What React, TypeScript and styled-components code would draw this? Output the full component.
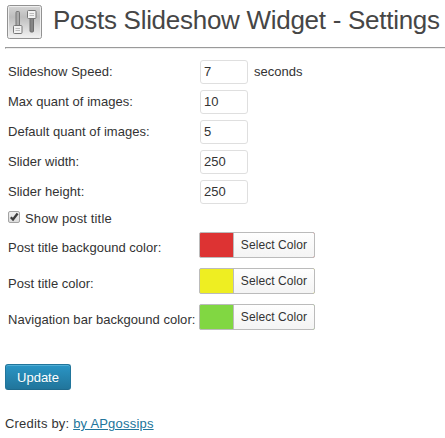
import React, { useState } from "react";
import styled, { createGlobalStyle } from "styled-components";

const GlobalStyle = createGlobalStyle`
  * { box-sizing: border-box; }
  body {
    margin: 0;
    background: #fff;
    color: #333;
    font: 13px/20px "Liberation Sans", Arial, sans-serif;
  }
`;

const Page = styled.main`
  width: 445px;
  height: 438px;
  padding-left: 5px;
  overflow: hidden;
`;

const Header = styled.header`
  display: flex;
  height: 47px;
  padding: 4px 0 0 1px;
`;

const Title = styled.h1`
  margin: 0 0 0 10px;
  font-size: 26px;
  line-height: 32px;
  font-weight: 400;
  letter-spacing: -0.28px;
  color: #464646;
  white-space: nowrap;
`;

const Rule = styled.hr`
  height: 2px;
  margin: 0 0 8px;
  border: 1px solid;
  border-color: #9a9a9a #eee #eee #9a9a9a;
  border-right: 0;
`;

const Row = styled.div<{ $height: number }>`
  display: grid;
  grid-template-columns: 191px auto;
  justify-content: start;
  align-items: center;
  height: ${(p) => p.$height}px;
  padding-left: 3px;
  white-space: nowrap;
`;

const Label = styled.label<{ $drop?: number }>`
  padding-top: ${(p) => p.$drop ?? 0}px;
  letter-spacing: 0.03px;
`;

const Field = styled.div`
  display: flex;
  align-items: center;
  gap: 6px;
  padding-left: 1px;
`;

const NumberInput = styled.input`
  width: 48px;
  height: 24px;
  padding: 2px 3px 4px;
  border: 1px solid #dfdfdf;
  border-radius: 3px;
  background: #fff;
  color: #333;
  font: 13px/15px "Liberation Sans", Arial, sans-serif;
`;

const CheckRow = styled.label`
  display: flex;
  align-items: center;
  gap: 5px;
  height: 20px;
  padding: 3px 0 0 3px;
  line-height: 22px;
  letter-spacing: 0.15px;
`;

const ColorButton = styled.button<{ $color: string }>`
  display: flex;
  width: 116px;
  height: 26px;
  padding: 0;
  border: 1px solid #bbb;
  border-radius: 2px;
  background: ${(p) => p.$color};
  overflow: hidden;
`;

const ColorText = styled.span`
  width: 81px;
  height: 24px;
  margin-left: auto;
  border-left: 1px solid #bbb;
  background: linear-gradient(#fefefe, #f4f4f4);
  color: #333;
  font: 12px/24px "Liberation Sans", Arial, sans-serif;
  letter-spacing: 0.08px;
  text-align: center;
`;

const UpdateButton = styled.button`
  display: block;
  width: 66px;
  height: 26px;
  margin-top: 29px;
  padding: 1px 0 0;
  border: 1px solid #21759b;
  border-bottom-color: #1e6a8d;
  border-radius: 3px;
  background: linear-gradient(#2a95c5, #21759b);
  box-shadow: inset 0 1px 0 rgba(120, 200, 230, 0.5);
  color: #fff;
  font: 13px/23px "Liberation Sans", Arial, sans-serif;
  text-shadow: 0 1px 0 rgba(0, 0, 0, 0.1);
`;

const Credits = styled.p`
  margin: 24px 0 0;
  letter-spacing: 0.2px;
`;

const CreditLink = styled.a`
  color: #21759b;
`;

const IconSvg = styled.svg`
  flex: none;
`;

const SlidersIcon = () => (
  <IconSvg width="37" height="36" viewBox="0 0 37 36" aria-hidden="true">
    <defs>
      <linearGradient id="panel" x1="0" y1="0" x2="0" y2="1">
        <stop offset="0" stopColor="#d6d6d6" />
        <stop offset="0.35" stopColor="#bdbdbd" />
        <stop offset="1" stopColor="#f4f4f4" />
      </linearGradient>
    </defs>
    <rect x="1.5" y="1.5" width="34" height="33" rx="2" fill="url(#panel)" stroke="#929292" />
    <rect x="2.5" y="2.5" width="32" height="31" rx="1" fill="none" stroke="#eee" />
    <rect x="10" y="7.5" width="3.5" height="15" rx="1" fill="#aaa" stroke="#777" />
    <rect x="24" y="12.5" width="3.5" height="15.5" rx="1" fill="#858585" stroke="#6d6d6d" />
    <rect x="7.5" y="21.5" width="8.5" height="8" rx="1" fill="#f2f2f2" stroke="#777" />
    <path d="M9.5 24.5h4.5M9.5 26.5h4.5" stroke="#bbb" />
    <rect x="21.5" y="6.5" width="8.5" height="8" rx="1" fill="#f2f2f2" stroke="#777" />
    <path d="M23.5 9.5h4.5M23.5 11.5h4.5" stroke="#bbb" />
  </IconSvg>
);

const CheckControl = styled.button`
  width: 12px;
  height: 12px;
  margin-top: -4px;
  padding: 0;
  border: 1px solid #a3a3a3;
  border-radius: 2px;
  background: linear-gradient(#eee, #ddd);
  svg { display: block; overflow: visible; }
`;

const numberFields = [
  { label: "Slideshow Speed:", value: "7", unit: "seconds" },
  { label: "Max quant of images:", value: "10" },
  { label: "Default quant of images:", value: "5" },
  { label: "Slider width:", value: "250" },
  { label: "Slider height:", value: "250" },
];

const colorFields = [
  { label: "Post title backgound color:", color: "#dd3333" },
  { label: "Post title color:", color: "#eeee22" },
  { label: "Navigation bar backgound color:", color: "#81d742" },
];

export default function App() {
  const [showTitle, setShowTitle] = useState(true);
  return (
    <Page>
      <GlobalStyle />
      <Header>
        <SlidersIcon />
        <Title>Posts Slideshow Widget - Settings</Title>
      </Header>
      <Rule />
      {numberFields.map((f, i) => (
        <Row key={f.label} $height={30}>
          <Label htmlFor={`n${i}`}>{f.label}</Label>
          <Field>
            <NumberInput id={`n${i}`} defaultValue={f.value} />
            {f.unit && <span>{f.unit}</span>}
          </Field>
        </Row>
      ))}
      <CheckRow>
        <CheckControl
          role="checkbox"
          aria-checked={showTitle}
          onClick={() => setShowTitle(!showTitle)}
        >
          {showTitle && (
            <svg width="10" height="10" viewBox="0 0 10 10">
              <path d="M1.8 5.2 4 7.5 8.6 1.5" fill="none" stroke="#3c3c3c" strokeWidth="2.3" />
            </svg>
          )}
        </CheckControl>
        <span>Show post title</span>
      </CheckRow>
      {colorFields.map((f) => (
        <Row key={f.label} $height={36}>
          <Label $drop={6}>{f.label}</Label>
          <ColorButton $color={f.color}>
            <ColorText>Select Color</ColorText>
          </ColorButton>
        </Row>
      ))}
      <UpdateButton>Update</UpdateButton>
      <Credits>
        Credits by: <CreditLink href="#">by APgossips</CreditLink>
      </Credits>
    </Page>
  );
}
